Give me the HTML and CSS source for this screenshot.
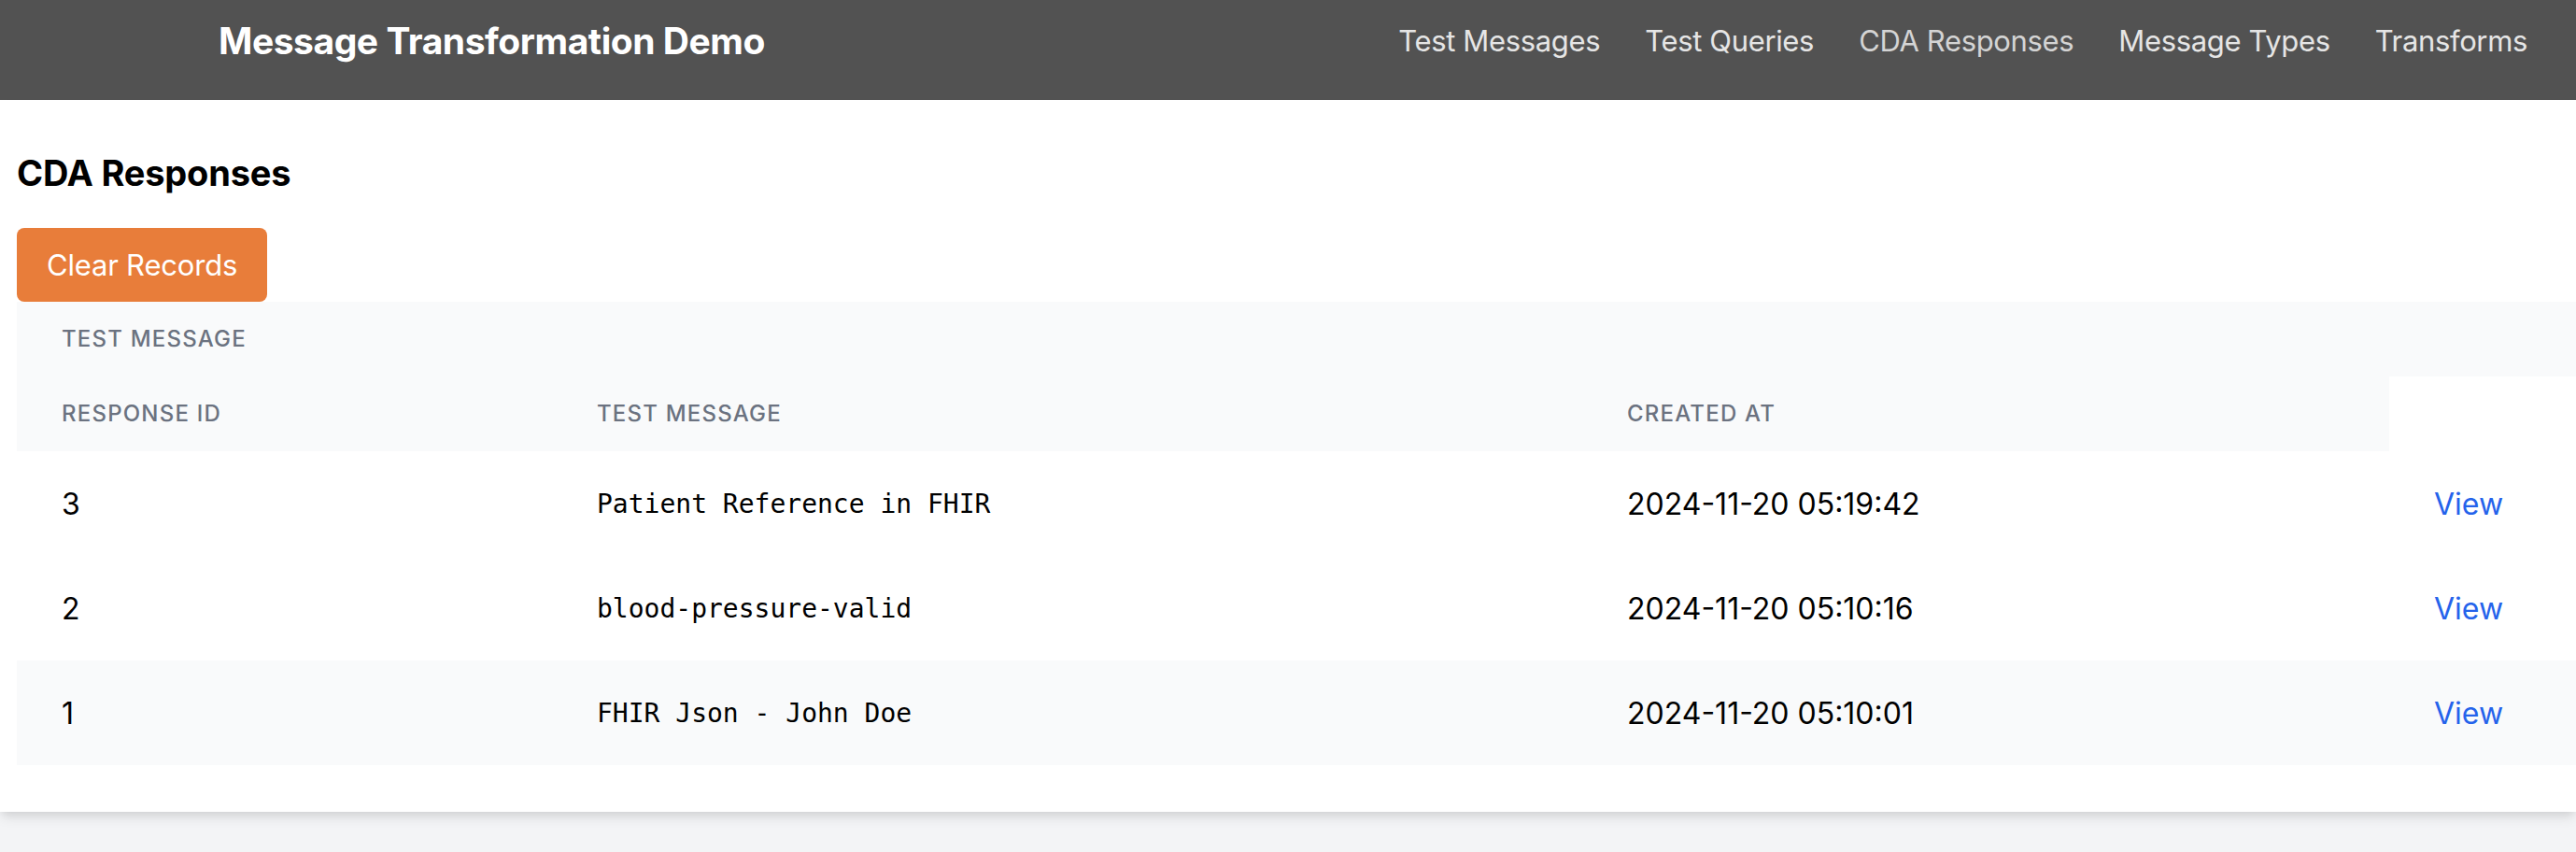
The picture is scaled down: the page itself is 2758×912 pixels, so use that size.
FILE: index.html
```html
<!DOCTYPE html>
<html lang="en">
<head>
<meta charset="utf-8">
<title>CDA Responses - Message Transformation Demo</title>
<link rel="stylesheet" href="styles.css">
</head>
<body>
<header class="topbar">
  <div class="topbar-row">
    <div class="brand">Message Transformation Demo</div>
    <nav class="nav">
      <a class="nav-link" href="#">Test Messages</a>
      <a class="nav-link" href="#">Test Queries</a>
      <a class="nav-link nav-active" href="#">CDA Responses</a>
      <a class="nav-link" href="#">Message Types</a>
      <a class="nav-link" href="#">Transforms</a>
    </nav>
  </div>
</header>
<main class="card">
  <h1 class="page-title">CDA Responses</h1>
  <button class="btn-clear" type="button">Clear Records</button>
  <table class="responses">
    <colgroup>
      <col class="c-id">
      <col class="c-msg">
      <col class="c-date">
      <col class="c-act">
    </colgroup>
    <thead>
      <tr>
        <th colspan="4">Test Message</th>
      </tr>
      <tr>
        <th>Response ID</th>
        <th>Test Message</th>
        <th>Created At</th>
      </tr>
    </thead>
    <tbody>
      <tr>
        <td>3</td>
        <td class="mono">Patient Reference in FHIR</td>
        <td>2024-11-20 05:19:42</td>
        <td><a class="view-link" href="#">View</a></td>
      </tr>
      <tr>
        <td>2</td>
        <td class="mono">blood-pressure-valid</td>
        <td>2024-11-20 05:10:16</td>
        <td><a class="view-link" href="#">View</a></td>
      </tr>
      <tr class="row-alt">
        <td>1</td>
        <td class="mono">FHIR Json - John Doe</td>
        <td>2024-11-20 05:10:01</td>
        <td><a class="view-link" href="#">View</a></td>
      </tr>
    </tbody>
  </table>
</main>
</body>
</html>
```

FILE: styles.css
```css
* {
  box-sizing: border-box;
}

html, body {
  margin: 0;
  padding: 0;
}

body {
  background: #f3f4f6;
  font-family: Inter, "Liberation Sans", sans-serif;
  color: #000;
  min-height: 100vh;
}

.topbar {
  background: #525252;
  height: 107px;
  padding: 16px 52px 0 234px;
}

.topbar-row {
  display: flex;
  align-items: center;
  justify-content: space-between;
  height: 56px;
}

.brand {
  color: #fff;
  font-weight: 700;
  font-size: 39px;
  line-height: 56px;
  letter-spacing: -0.45px;
}

.nav {
  display: flex;
  gap: 48px;
}

.nav-link {
  color: #e5e5e5;
  text-decoration: none;
  font-size: 31px;
  line-height: 48px;
  letter-spacing: -0.35px;
}

.nav-active {
  color: #d4d4d4;
}

.card {
  background: #fff;
  padding: 50px 0 50px 18px;
  box-shadow: 0 8px 12px -2px rgba(0, 0, 0, 0.1), 0 4px 8px -2px rgba(0, 0, 0, 0.06);
}

.page-title {
  margin: 0 0 31px;
  font-size: 38px;
  line-height: 56px;
  font-weight: 700;
  letter-spacing: -0.2px;
}

.btn-clear {
  display: block;
  margin: 0;
  border: none;
  border-radius: 8px;
  background: #e87d3a;
  color: #fff;
  font-family: Inter, "Liberation Sans", sans-serif;
  font-size: 31px;
  line-height: 47px;
  letter-spacing: -0.2px;
  padding: 16px 32px;
  cursor: pointer;
}

.responses {
  width: 100%;
  border-collapse: collapse;
  table-layout: fixed;
}

.c-id { width: 573px; }
.c-msg { width: 1103px; }
.c-date { width: 864px; }

.responses th {
  background: #f9fafb;
  text-align: left;
  padding: 24px 48px;
  font-size: 24px;
  line-height: 32px;
  font-weight: 500;
  letter-spacing: 0.05em;
  text-transform: uppercase;
  color: #6b7280;
}

.responses td {
  padding: 33px 48px 31px;
  font-size: 32px;
  line-height: 48px;
  color: #000;
  vertical-align: middle;
  white-space: nowrap;
}

.responses td.mono {
  font-family: "DejaVu Sans Mono", "Liberation Mono", monospace;
  font-size: 28px;
}

.row-alt td {
  background: #f9fafb;
}

.view-link {
  color: #2563eb;
  text-decoration: none;
}
```
